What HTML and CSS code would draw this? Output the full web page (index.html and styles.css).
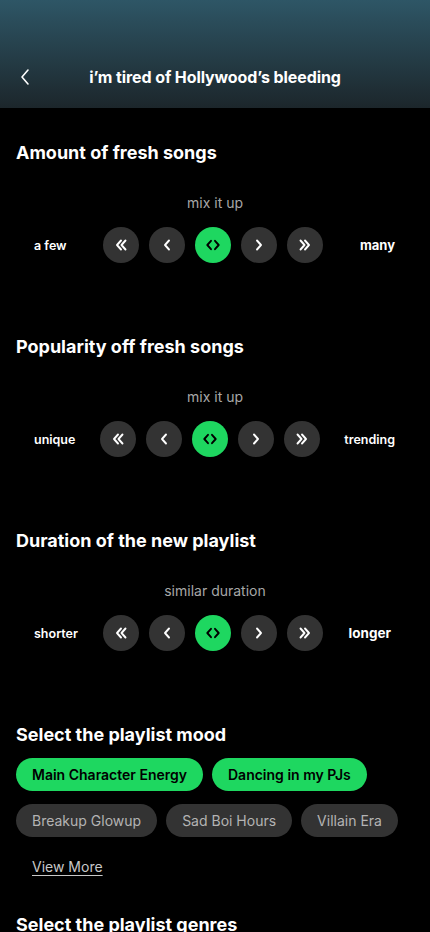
FILE: index.html
```html
<!DOCTYPE html>
<html lang="en">
<head>
<meta charset="UTF-8" />
<meta name="viewport" content="width=device-width, initial-scale=1" />
<title>Playlist Settings</title>
<link rel="stylesheet" href="styles.css">
</head>
<body>
  <header class="top-bar">
    <a href="#" class="back" aria-label="Back">
      <svg width="12" height="18" viewBox="0 0 12 18"><path d="M9 2 L3 9 L9 16" fill="none" stroke="#fff" stroke-width="1.6" stroke-linecap="round" stroke-linejoin="round"/></svg>
    </a>
    <h1>i’m tired of Hollywood’s bleeding</h1>
    <span></span>
  </header>

  <main class="content">
    <section class="setting">
      <h2>Amount of fresh songs</h2>
      <p class="current">mix it up</p>
      <div class="picker">
        <span class="end">a few</span>
        <div class="steps">
          <button class="step"><svg viewBox="0 0 16 16"><path d="M8 3.5 L4 8 L8 12.5 M12.5 3.5 L8.5 8 L12.5 12.5"/></svg></button>
          <button class="step"><svg viewBox="0 0 16 16"><path d="M10 3.5 L6 8 L10 12.5"/></svg></button>
          <button class="step active"><svg viewBox="0 0 16 16"><path d="M6 3.8 L2.3 8 L6 12.2 M10 3.8 L13.7 8 L10 12.2"/></svg></button>
          <button class="step"><svg viewBox="0 0 16 16"><path d="M6 3.5 L10 8 L6 12.5"/></svg></button>
          <button class="step"><svg viewBox="0 0 16 16"><path d="M3.5 3.5 L7.5 8 L3.5 12.5 M8 3.5 L12 8 L8 12.5"/></svg></button>
        </div>
        <span class="end big">many</span>
      </div>
    </section>

    <section class="setting">
      <h2>Popularity off fresh songs</h2>
      <p class="current">mix it up</p>
      <div class="picker">
        <span class="end">unique</span>
        <div class="steps">
          <button class="step"><svg viewBox="0 0 16 16"><path d="M8 3.5 L4 8 L8 12.5 M12.5 3.5 L8.5 8 L12.5 12.5"/></svg></button>
          <button class="step"><svg viewBox="0 0 16 16"><path d="M10 3.5 L6 8 L10 12.5"/></svg></button>
          <button class="step active"><svg viewBox="0 0 16 16"><path d="M6 3.8 L2.3 8 L6 12.2 M10 3.8 L13.7 8 L10 12.2"/></svg></button>
          <button class="step"><svg viewBox="0 0 16 16"><path d="M6 3.5 L10 8 L6 12.5"/></svg></button>
          <button class="step"><svg viewBox="0 0 16 16"><path d="M3.5 3.5 L7.5 8 L3.5 12.5 M8 3.5 L12 8 L8 12.5"/></svg></button>
        </div>
        <span class="end">trending</span>
      </div>
    </section>

    <section class="setting">
      <h2>Duration of the new playlist</h2>
      <p class="current">similar duration</p>
      <div class="picker">
        <span class="end">shorter</span>
        <div class="steps">
          <button class="step"><svg viewBox="0 0 16 16"><path d="M8 3.5 L4 8 L8 12.5 M12.5 3.5 L8.5 8 L12.5 12.5"/></svg></button>
          <button class="step"><svg viewBox="0 0 16 16"><path d="M10 3.5 L6 8 L10 12.5"/></svg></button>
          <button class="step active"><svg viewBox="0 0 16 16"><path d="M6 3.8 L2.3 8 L6 12.2 M10 3.8 L13.7 8 L10 12.2"/></svg></button>
          <button class="step"><svg viewBox="0 0 16 16"><path d="M6 3.5 L10 8 L6 12.5"/></svg></button>
          <button class="step"><svg viewBox="0 0 16 16"><path d="M3.5 3.5 L7.5 8 L3.5 12.5 M8 3.5 L12 8 L8 12.5"/></svg></button>
        </div>
        <span class="end bigger">longer</span>
      </div>
    </section>

    <section class="setting mood">
      <h2>Select the playlist mood</h2>
      <div class="chips">
        <button class="chip selected">Main Character Energy</button>
        <button class="chip selected">Dancing in my PJs</button>
        <button class="chip">Breakup Glowup</button>
        <button class="chip">Sad Boi Hours</button>
        <button class="chip">Villain Era</button>
      </div>
      <a href="#" class="more">View More</a>
    </section>

    <section class="setting">
      <h2>Select the playlist genres</h2>
    </section>
  </main>
</body>
</html>
```

FILE: styles.css
```css
* {
  box-sizing: border-box;
}
body {
  margin: 0;
  background: #000;
  color: #fff;
  font-family: Inter, 'Noto Sans', sans-serif;
  height: 932px;
  overflow: hidden;
}

/* Header */
.top-bar {
  height: 108px;
  background: linear-gradient(180deg, #2e5666 0%, #1c262b 100%);
  display: grid;
  grid-template-columns: 1fr auto 1fr;
  align-items: end;
  padding: 0 19px 20px;
}
.back {
  display: flex;
  height: 22px;
  align-items: center;
}
.top-bar h1 {
  margin: 0;
  font-size: 16px;
  line-height: 22px;
  font-weight: 700;
  letter-spacing: -0.1px;
}

/* Settings */
.content {
  padding: 34px 16px 0;
}
.setting {
  margin-bottom: 73px;
}
.setting h2 {
  margin: 0 0 29px;
  font-size: 18px;
  line-height: 22px;
  font-weight: 700;
}
.current {
  margin: 0 0 14px;
  text-align: center;
  font-size: 14px;
  line-height: 20px;
  color: #a7a7a7;
}
.picker {
  display: flex;
  justify-content: space-between;
  align-items: center;
  padding: 0 19px 0 18px;
}
.end {
  font-size: 12.5px;
  font-weight: 600;
}
.end.big {
  font-size: 13px;
  font-weight: 700;
}
.end.bigger {
  font-size: 13.5px;
  font-weight: 700;
  margin-right: 4px;
}
.steps {
  display: flex;
  gap: 10px;
}
.step {
  width: 36px;
  height: 36px;
  border-radius: 50%;
  border: none;
  padding: 0;
  background: #333;
  display: flex;
  align-items: center;
  justify-content: center;
}
.step svg {
  width: 16px;
  height: 16px;
  fill: none;
  stroke: #fff;
  stroke-width: 1.9;
  stroke-linecap: round;
  stroke-linejoin: round;
}
.step.active {
  background: #1ed760;
}
.step.active svg {
  stroke: #000;
}

/* Mood */
.setting.mood h2 {
  margin-bottom: 12px;
}
.chips {
  display: flex;
  flex-wrap: wrap;
  gap: 13px 9px;
}
.chip {
  height: 33px;
  padding: 0 16px;
  border-radius: 17px;
  border: none;
  background: #333;
  color: #b3b3b3;
  font-family: Inter, 'Noto Sans', sans-serif;
  font-size: 14px;
}
.chip.selected {
  background: #1ed760;
  color: #000;
  font-weight: 600;
}
.more {
  display: inline-block;
  margin: 20px 0 0 16px;
  font-size: 14px;
  line-height: 20px;
  color: #c8c8c8;
  text-decoration: underline;
  text-underline-offset: 3px;
}
.mood {
  margin-bottom: 37px;
}
```
